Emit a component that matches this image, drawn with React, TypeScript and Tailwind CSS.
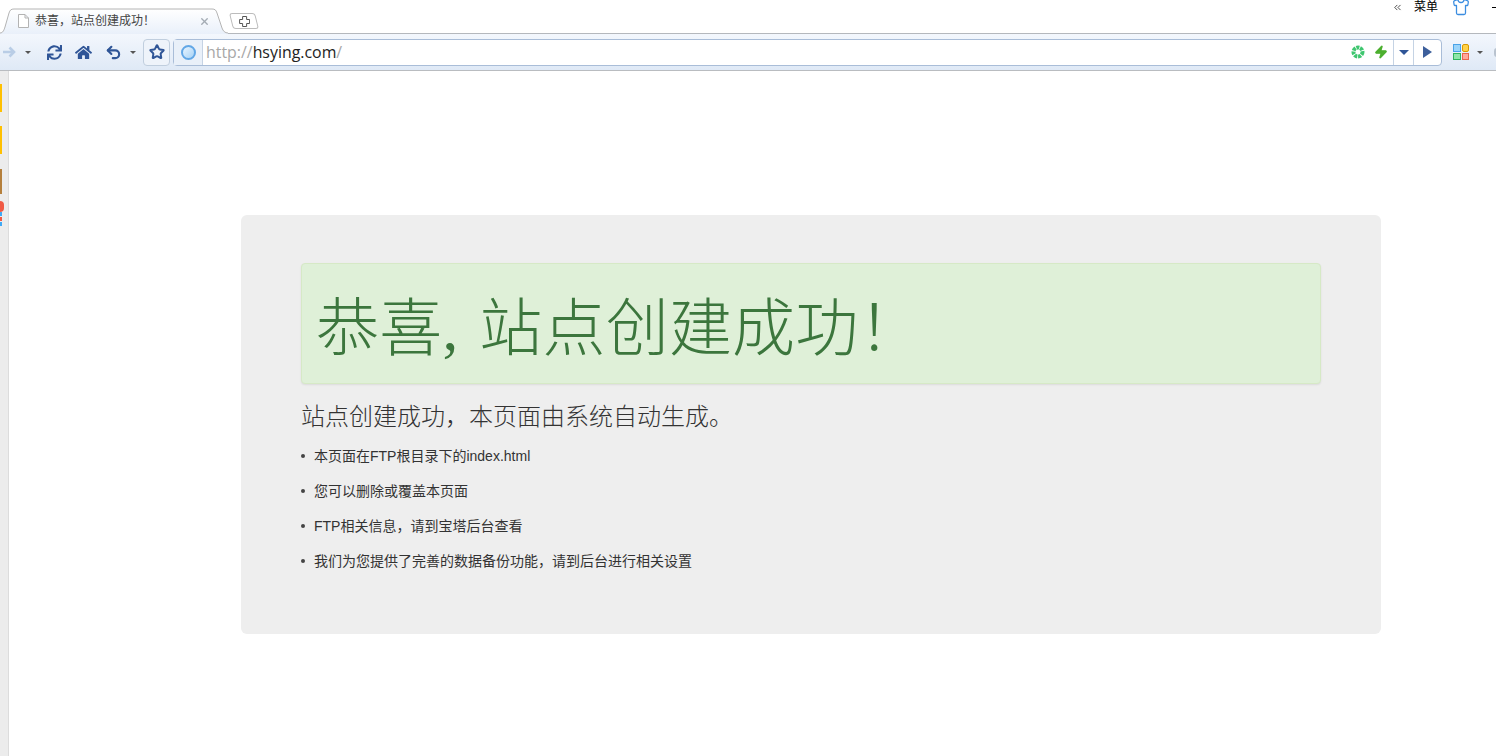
import { ChevronsLeft, Shirt, Star, Undo2, X, Zap } from "lucide-react";
import { FaHome, FaSync } from "react-icons/fa";

const ui = "font-['Liberation_Sans','Noto_Sans_CJK_SC',sans-serif]";

// full-width punctuation, written as escapes so it stays full-width
const COMMA = "\uFF0C";
const BANG = "\uFF01";

const items = [
  "本页面在FTP根目录下的index.html",
  "您可以删除或覆盖本页面",
  `FTP相关信息${COMMA}请到宝塔后台查看`,
  `我们为您提供了完善的数据备份功能${COMMA}请到后台进行相关设置`,
];

function Caret({ className }: { className: string }) {
  return <span className={`h-0 w-0 shrink-0 border-x-[3px] border-t-[3px] border-x-transparent ${className}`} />;
}

function TabStrip() {
  return (
    <div className="relative flex h-[34px] items-end border-b border-[#b4b8bd] bg-white">
      <div className="relative mb-[-1px] flex h-[26px] w-[228px] shrink-0 items-center pl-[18px] pr-[18px]">
        <svg className="absolute inset-0" width="228" height="26" viewBox="0 0 228 26">
          <defs>
            <linearGradient id="tabFill" x1="0" y1="0" x2="0" y2="1">
              <stop offset="0" stopColor="#ffffff" />
              <stop offset="1" stopColor="#e9f0fa" />
            </linearGradient>
          </defs>
          <path
            d="M0 25 C3 25 4 22 5 19 L9 5 C10 2 11 1 14 1 L212 1 C215 1 216 2 217 5 L222 20 C223 23 225 25 228 25 L228 26 L0 26 Z"
            fill="url(#tabFill)"
          />
          <path
            d="M0 25 C3 25 4 22 5 19 L9 5 C10 2 11 1 14 1 L212 1 C215 1 216 2 217 5 L222 20 C223 23 225 25 228 25"
            fill="none"
            stroke="#b4b4b4"
          />
        </svg>
        <svg className="relative mr-[6px] shrink-0" width="11" height="14" viewBox="0 0 11 14">
          <path d="M.5.5h6.500l3.500 3.500v9.500h-10zM7 .5v3.500h3.500" fill="#fff" stroke="#b3b3b3" />
        </svg>
        <span className="relative flex-1 text-[12px] text-[#444]">{`恭喜${COMMA}站点创建成功${BANG}`}</span>
        <X className="relative text-[#a4abb4]" size={11} strokeWidth={3} />
      </div>
      <div className="mb-[4px] ml-[3px] flex h-[16px] w-[26px] skew-x-[14deg] items-center justify-center rounded-[3px] border border-[#bcbcbc] bg-white">
        <svg className="-skew-x-[14deg]" width="11" height="11" viewBox="0 0 11 11">
          <path d="M3.500.5h4v3h3v4h-3v3h-4v-3h-3v-4h3z" fill="#fff" stroke="#555" />
        </svg>
      </div>
      <div className="absolute right-[26px] top-0 flex h-[14px] items-center text-black">
        <ChevronsLeft size={11} strokeWidth={1.5} />
        <span className="ml-[11px] text-[12px] leading-[14px]">菜单</span>
        <Shirt className="ml-[14px] fill-white text-[#3b8de0]" size={18} strokeWidth={1.7} />
      </div>
      <span className="absolute right-0 top-[7px] h-px w-[4px] bg-black" />
    </div>
  );
}

function Toolbar() {
  return (
    <div className="flex h-[37px] items-center border-b border-[#b9bcc0] bg-gradient-to-b from-[#f3f7fd] to-[#dfe9f6]">
      <svg className="ml-[2px] shrink-0" width="14" height="12" viewBox="0 0 14 12">
        <path d="M1 6h11M7.500 1.500 12 6l-4.500 4.500" fill="none" stroke="#b9cde6" strokeWidth="2.600" />
      </svg>
      <Caret className="ml-[9px] border-t-[#555]" />
      <FaSync className="ml-[16px] shrink-0 text-[#2f5597]" size={15} />
      <FaHome className="ml-[13px] shrink-0 text-[#2f5597]" size={17} />
      <Undo2 className="ml-[13px] shrink-0 text-[#2f5597]" size={17} strokeWidth={3} />
      <Caret className="ml-[8px] border-t-[#555]" />
      <div className="ml-[7px] flex h-[27px] w-[27px] shrink-0 items-center justify-center rounded-[4px] border border-[#c0cede] bg-[#eef3fa]">
        <Star className="text-[#2f5597]" size={16} strokeWidth={3} />
      </div>
      <div className="ml-[3px] flex h-[27px] w-[1269px] shrink-0 items-center rounded-[4px] border border-[#a9bdd8] bg-white">
        <div className="flex h-full w-[29px] items-center justify-center border-r border-[#c5d3e4] bg-[#e9f0f9]">
          <span className="h-[15px] w-[15px] rounded-full border-[2px] border-[#62a7e6] bg-gradient-to-br from-[#eaf5ff] to-[#a6d2f5]" />
        </div>
        <div className="flex-1 pl-[3px] font-['Open_Sans',sans-serif] text-[15.900px] leading-[20px]">
          <span className="text-[#a8a8a8]">http://</span>
          <span className="text-[#222]">hsying.com</span>
          <span className="text-[#a8a8a8]">/</span>
        </div>
        <svg width="14" height="14" viewBox="0 0 14 14">
          <circle cx="7" cy="7" r="4.500" fill="none" stroke="#3ec66f" strokeWidth="4" strokeDasharray="3 .8" />
        </svg>
        <Zap className="ml-[9px] fill-[#4caf2f] text-[#4caf2f]" size={14} />
        <div className="ml-[5px] flex h-full w-[21px] items-center justify-center border-x border-[#c5d3e4]">
          <span className="h-0 w-0 border-x-[5px] border-t-[5px] border-x-transparent border-t-[#2f5597]" />
        </div>
        <div className="flex h-full w-[27px] items-center justify-center">
          <span className="h-0 w-0 border-y-[6px] border-l-[9px] border-y-transparent border-l-[#3d5f9b]" />
        </div>
      </div>
      <div className="ml-[11px] grid h-[16px] w-[16px] shrink-0 grid-cols-2 gap-px">
        <span className="border border-[#4aa3e8] bg-[#9bd4fa]" />
        <span className="rounded-[2px] border border-[#d99a00] bg-[#ffd24a]" />
        <span className="border border-[#2eb45c] bg-[#8fe6a8]" />
        <span className="border border-[#e8654f] bg-[#ffa799]" />
      </div>
      <Caret className="ml-[8px] border-t-[#555]" />
      <span className="ml-[11px] h-[9px] w-[3px] shrink-0 rounded-l-full bg-[#b9c3cf]" />
    </div>
  );
}

function Sidebar() {
  return (
    <div className="flex w-[9px] shrink-0 flex-col border-r border-[#dcdcdc] bg-[#ececec] pt-[13px]">
      <span className="h-[28px] w-[2px] bg-[#ffc000]" />
      <span className="mt-[14px] h-[28px] w-[2px] bg-[#ffc000]" />
      <span className="mt-[15px] h-[25px] w-[2px] bg-[#b5803c]" />
      <span className="mt-[7px] h-[11px] w-[4px] rounded-r-full bg-[#f05a45]" />
      <span className="h-[4px] w-[2px] bg-[#3fa9f5]" />
      <span className="mt-[1px] h-[4px] w-[2px] bg-[#f05a45]" />
      <span className="mt-[1px] h-[4px] w-[2px] bg-[#3fa9f5]" />
    </div>
  );
}

export default function App() {
  return (
    <div className={`flex h-[756px] w-[1496px] flex-col overflow-hidden bg-white ${ui}`}>
      <TabStrip />
      <Toolbar />
      <div className="flex flex-1">
        <Sidebar />
        <main className="pl-[232px] pt-[144px]">
          <div className="h-[419px] w-[1140px] rounded-[6px] bg-[#eeeeee] px-[60px] pt-[48px]">
            <div className="flex h-[121px] items-center rounded-[4px] border border-[#d6e9c6] bg-[#dff0d8] pl-[14px] pt-[12px] shadow-[0_1px_2px_rgba(0,0,0,0.08)]">
              <h1 className="font-['Liberation_Serif','Noto_Sans_CJK_SC',serif] text-[63px] font-light leading-[69px] tracking-[0.2px] text-[#3c763d]">
                恭喜<span className="mr-[5px]">,</span> {`站点创建成功${BANG}`}
              </h1>
            </div>
            <h2 className="mt-[20px] text-[24px] font-light leading-[26px] text-[#333]">
              {`站点创建成功${COMMA}本页面由系统自动生成。`}
            </h2>
            <ul className="mt-[16px] flex flex-col gap-[15px] text-[14px] leading-[20px] text-[#333]">
              {items.map((item) => (
                <li key={item} className="flex items-center">
                  <span className="mr-[9px] h-[4px] w-[4px] rounded-full bg-[#444]" />
                  {item}
                </li>
              ))}
            </ul>
          </div>
        </main>
      </div>
    </div>
  );
}
